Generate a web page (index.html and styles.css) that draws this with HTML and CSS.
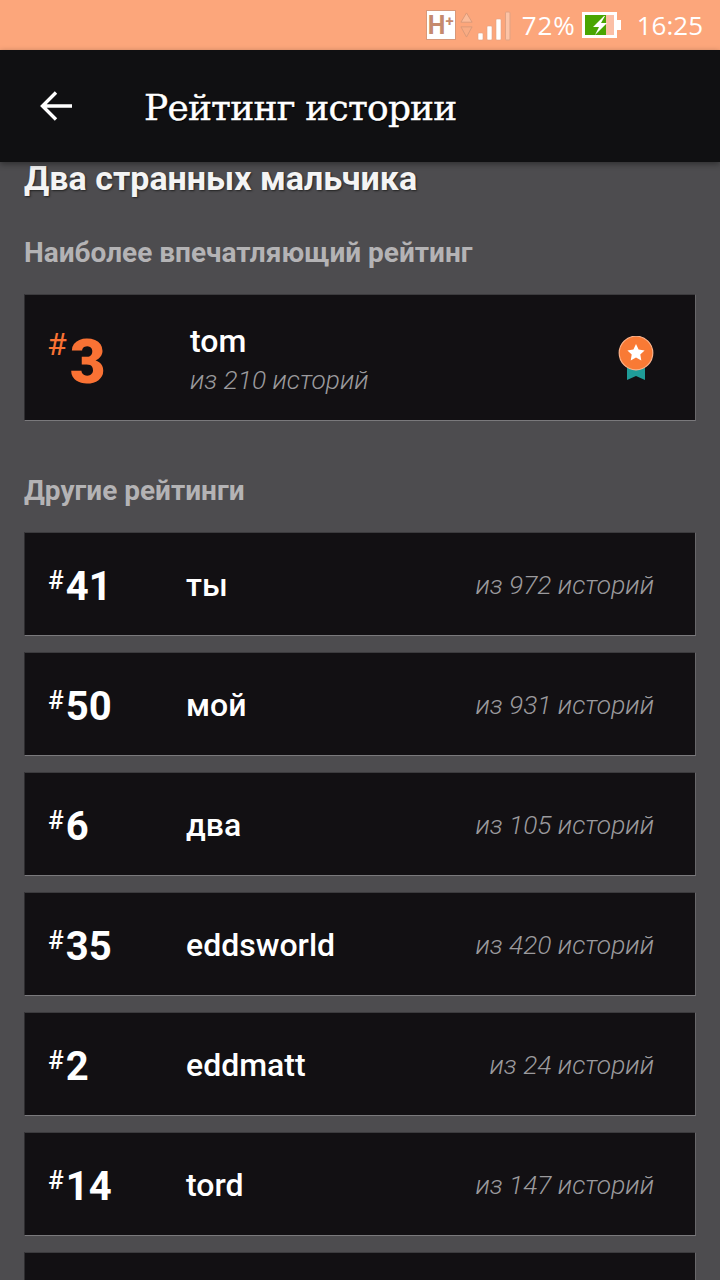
FILE: index.html
```html
<!DOCTYPE html>
<html lang="ru">
<head>
<meta charset="utf-8">
<title>Рейтинг истории</title>
<link rel="stylesheet" href="styles.css">
</head>
<body>
<div class="screen">
  <header class="status">
    <span class="net">H<sup>+</sup></span>
    <svg class="arrows" width="13" height="26" viewBox="0 0 14 28"><path d="M7 1l6 10H1z" fill="#fbbb99" stroke="#d89878"/><path d="M7 27l6-11H1z" fill="#f8ab83" stroke="#d89878"/></svg>
    <svg class="signal" width="34" height="30" viewBox="0 0 34 30"><rect x="1" y="22" width="5" height="7" rx="1" fill="#fff" stroke="#e0a283" stroke-width=".6"/><rect x="10" y="15" width="5" height="14" rx="1" fill="#fff" stroke="#e0a283" stroke-width=".6"/><rect x="19" y="8" width="5" height="21" rx="1" fill="#fff" stroke="#e0a283" stroke-width=".6"/><rect x="28.500" y="1" width="4.500" height="28" rx="1" fill="#fcc3a6" stroke="#e0a283"/></svg>
    <span class="pct">72%</span>
    <svg class="battery" width="40" height="26" viewBox="0 0 40 26"><rect x="1" y="1" width="33" height="24" fill="#fff" stroke="#fff" stroke-width="2"/><rect x="3" y="3" width="21" height="20" fill="#4aa502"/><rect x="24" y="3" width="8" height="20" fill="#fbbfa6"/><rect x="35" y="8" width="4" height="10" fill="#fff"/><path d="M22 4l-11 11h6l-4 8 12-12h-6l4-7z" fill="#fff"/></svg>
    <span class="time">16:25</span>
  </header>
  <nav class="appbar">
    <svg class="back" width="34" height="34" viewBox="0 0 34 34"><path d="M33 17H4M17 3.500L3.500 17 17 30.500" fill="none" stroke="#fff" stroke-width="3.400"/></svg>
    <h1 class="page-title">Рейтинг истории</h1>
  </nav>
  <main class="content">
    <h2 class="story">Два странных мальчика</h2>
    <h3 class="section first">Наиболее впечатляющий рейтинг</h3>
    <section class="card top">
      <div class="rank orange"><span class="hash">#</span><span class="num">3</span></div>
      <div class="top-info">
        <div class="top-name">tom</div>
        <div class="count">из 210 историй</div>
      </div>
      <svg class="medal" width="36" height="44" viewBox="0 0 36 44"><path d="M9 28h18v16l-9-4-9 4z" fill="#1f9c98"/><circle cx="18" cy="17" r="16.800" fill="#f97a35" stroke="#fdb28a" stroke-width="1.200"/><polygon points="18,8 20.600,13.600 26.600,14.400 22.300,18.500 23.300,24.600 18,21.600 12.700,24.600 13.700,18.500 9.400,14.400 15.400,13.600" fill="#fff"/></svg>
    </section>
    <h3 class="section other">Другие рейтинги</h3>
    <section class="card row"><div class="rank"><span class="hash">#</span><span class="num">41</span></div><div class="tag">ты</div><div class="count">из 972 историй</div></section>
    <section class="card row"><div class="rank"><span class="hash">#</span><span class="num">50</span></div><div class="tag">мой</div><div class="count">из 931 историй</div></section>
    <section class="card row"><div class="rank"><span class="hash">#</span><span class="num">6</span></div><div class="tag">два</div><div class="count">из 105 историй</div></section>
    <section class="card row"><div class="rank"><span class="hash">#</span><span class="num">35</span></div><div class="tag">eddsworld</div><div class="count">из 420 историй</div></section>
    <section class="card row"><div class="rank"><span class="hash">#</span><span class="num">2</span></div><div class="tag">eddmatt</div><div class="count">из 24 историй</div></section>
    <section class="card row"><div class="rank"><span class="hash">#</span><span class="num">14</span></div><div class="tag">tord</div><div class="count">из 147 историй</div></section>
    <section class="card row"></section>
  </main>
</div>
</body>
</html>
```
FILE: styles.css
```css
* { box-sizing: border-box; }
html, body { margin: 0; padding: 0; height: 1280px; overflow: hidden; background: #4d4c4f; }
body { font-family: Roboto, "Noto Sans", sans-serif; color: #fff; }
.screen { width: 720px; height: 1280px; overflow: hidden; display: flex; flex-direction: column; }
.status { height: 50px; flex: none; background: #fca67b; display: flex; align-items: center; justify-content: flex-end; padding: 0 17px 0 0; color: #fff; font-size: 26px; font-family: "Open Sans", sans-serif; }
.net { width: 30px; height: 30px; margin-right: 4px; background: #fff; color: #c58a6d; font: 700 25px/29px Roboto, sans-serif; text-align: left; padding-left: 1px; border: 1px solid #d8997a; white-space: nowrap; overflow: hidden; }
.net sup { font-size: 15px; line-height: 0; vertical-align: 8px; }
.arrows { margin-right: 4px; }
.signal { margin-right: 11px; margin-top: 2px; }
.pct { margin-right: 6px; letter-spacing: .9px; }
.battery { margin-right: 15px; }
.appbar { height: 112px; flex: none; background: #101012; display: flex; align-items: center; padding: 0 0 0 39px; box-shadow: 0 2px 6px rgba(0,0,0,.4); position: relative; z-index: 1; }
.back { flex: none; margin-right: 71px; }
.page-title { margin: 0; font: 400 36px/1 "DejaVu Serif", serif; letter-spacing: -.8px; color: #fff; margin-top: 3px; -webkit-text-stroke: .4px #fff; text-shadow: 1px 1px 1px #000; }
.content { flex: 1; padding: 0 24px; min-height: 0; }
.story { margin: -2px 0 0; font-size: 34px; font-weight: 700; line-height: 36px; color: #f4f4f4; text-shadow: 1px 1px 2px #222; }
.section { margin: 0; font-size: 28px; font-weight: 700; line-height: 32px; color: #b4b3b5; }
.section.first { margin-top: 41px; margin-bottom: 25px; }
.section.other { margin-top: 54px; margin-bottom: 25px; }
.card { width: 672px; background: #121013; border-bottom: 1px solid #7a797c; border-right: 1px solid #68676a; border-top: 1px solid #3c3b3e; border-left: 1px solid #2e2d30; display: flex; align-items: center; }
.top { height: 127px; padding-left: 23px; }
.row { height: 104px; padding: 1px 41px 0 23px; margin-bottom: 16px; }
.rank { display: flex; align-items: flex-start; flex: none; font-weight: 700; color: #fff; margin-top: -1px; }
.row .rank { width: 138px; }
.top .rank { width: 142px; }
.hash { font-size: 26px; line-height: 30px; font-weight: 500; margin-right: 2px; margin-top: 6px; }
.num { font-size: 40px; line-height: 44px; margin-top: 6px; }
.orange { color: #f97234; margin-top: 0; }
.orange .num { font-size: 62px; font-weight: 900; line-height: 56px; margin-top: 8px; }
.orange .hash { font-size: 32px; line-height: 36px; font-weight: 400; margin-top: 0; margin-right: 3px; margin-left: -1px; }
.top-info { flex: 1; padding-top: 3px; }
.top-name { font-size: 32px; font-weight: 500; line-height: 40px; }
.count { font-size: 26.3px; font-weight: 300; font-style: italic; line-height: 36px; color: #9b9a9d; }
.top .count { margin-top: 1px; }
.top .medal { margin-right: 41px; }
.tag { flex: 1; font-size: 32px; font-weight: 500; line-height: 40px; }
```
